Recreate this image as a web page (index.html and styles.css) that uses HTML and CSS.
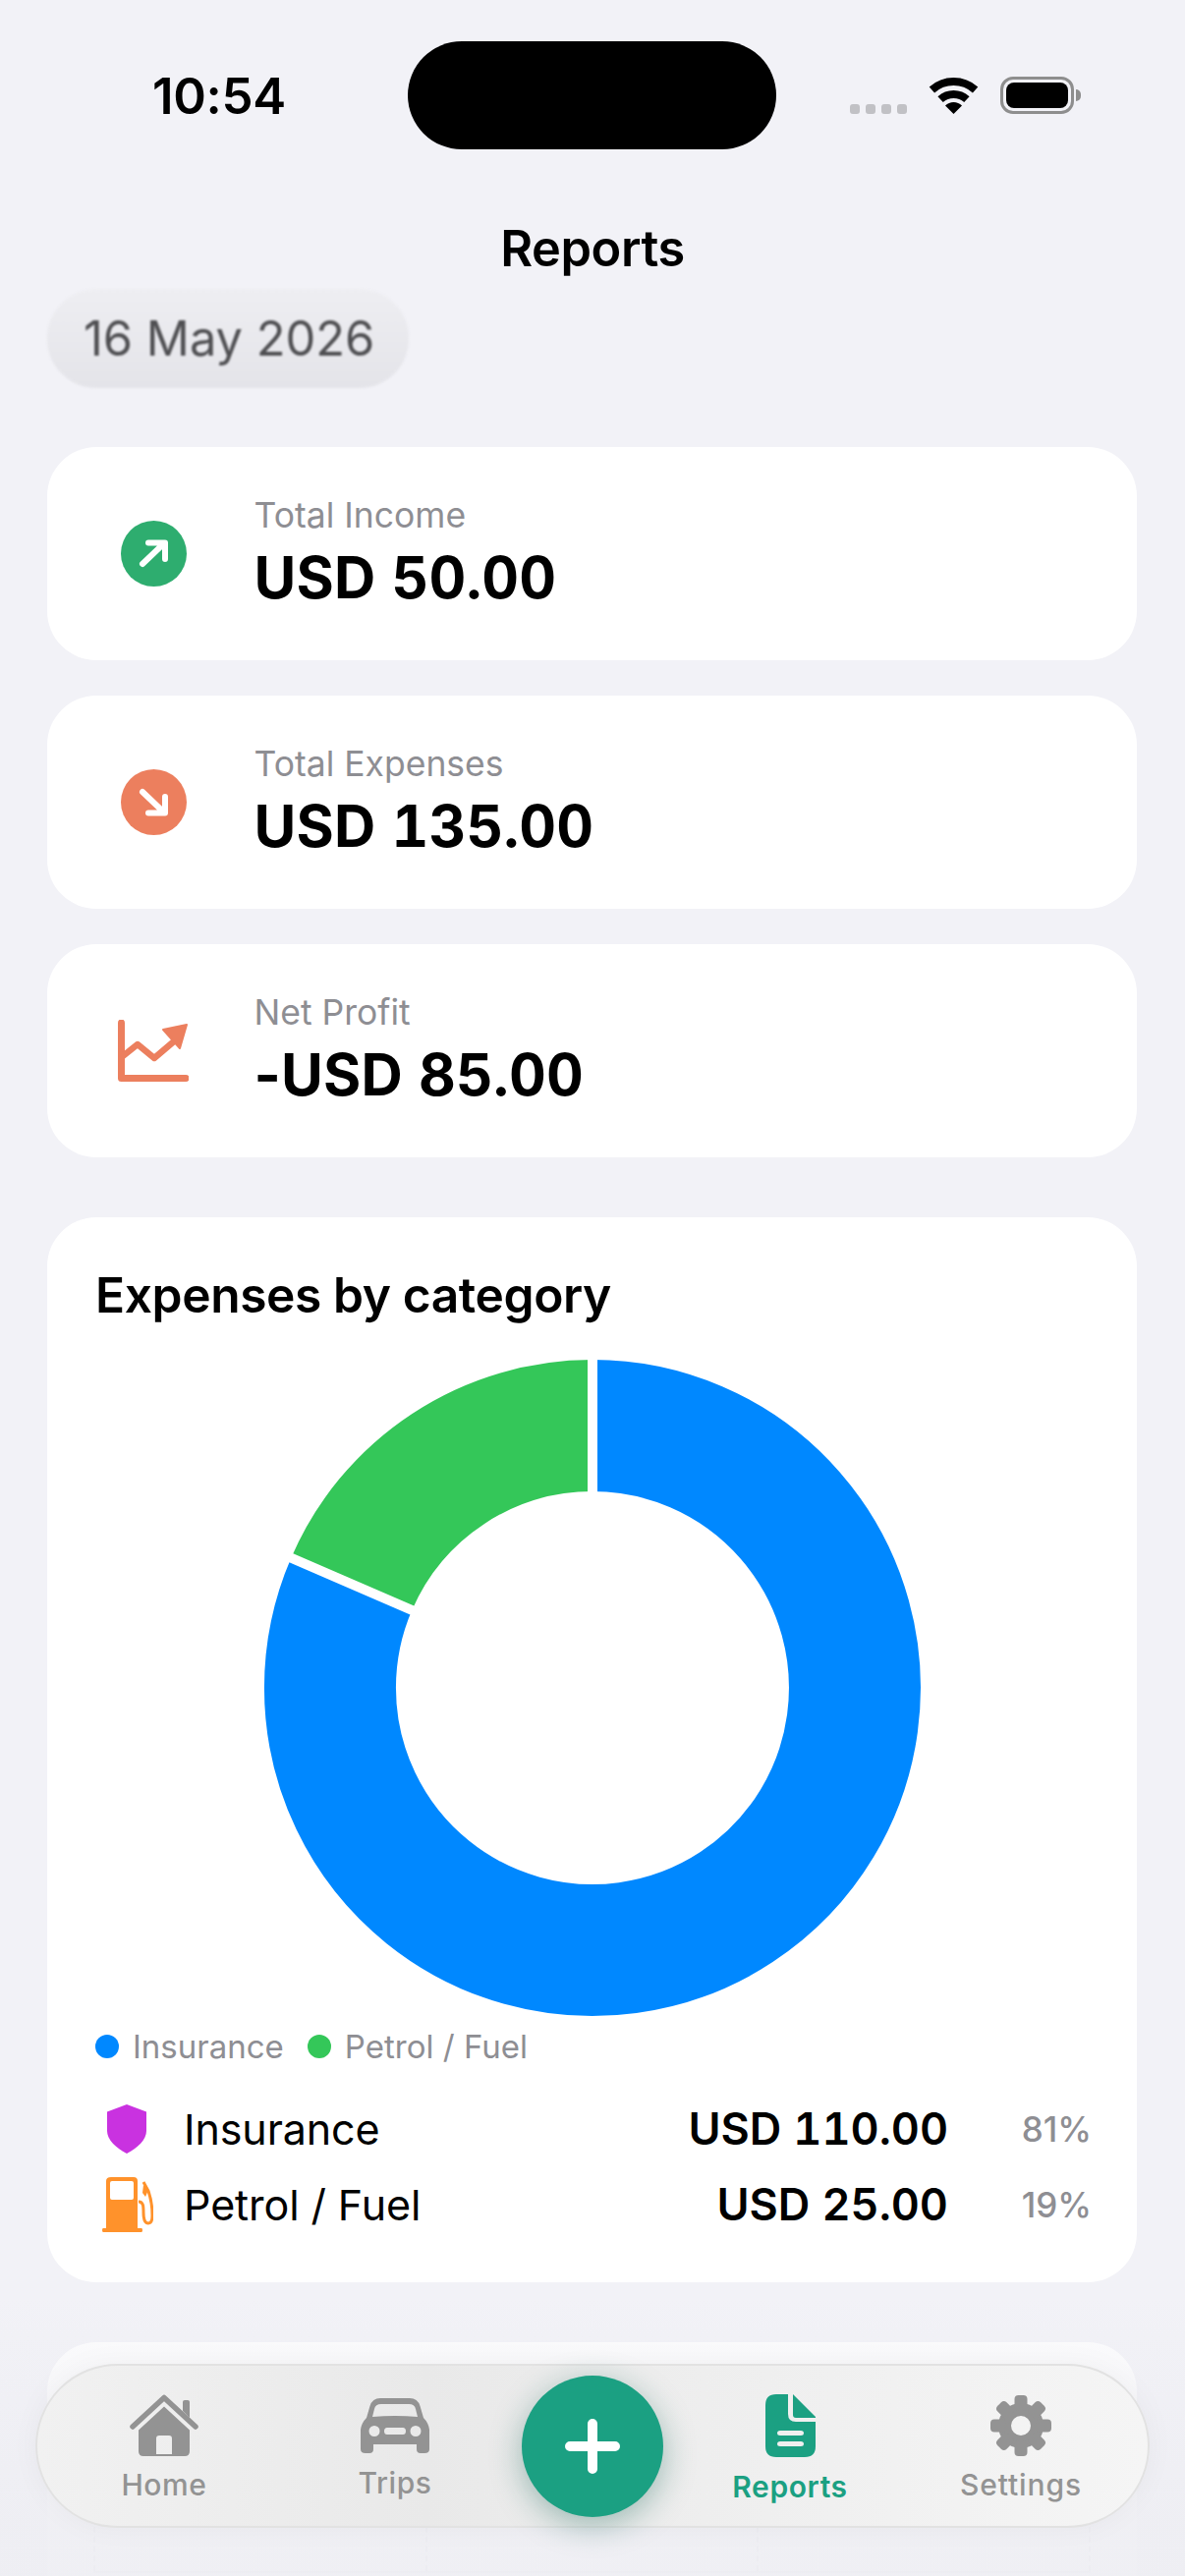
FILE: index.html
```html
<!DOCTYPE html>
<html>
<head>
  <meta charset="utf-8">
  <title>Reports</title>
  <link rel="stylesheet" href="styles.css">
</head>
<body>
  <div class="screen">
    <!-- status bar -->
    <header class="status">
      <span class="time">10:54</span>
      <div class="island"></div>
      <div class="status-icons">
        <div class="signal"><i></i><i></i><i></i><i></i></div>
        <svg class="wifi" width="51" height="38" viewBox="0 0 51 38">
          <path d="M3.4 13.5A33 33 0 0 1 47.6 13.5" fill="none" stroke="#000" stroke-width="8"/>
          <path d="M12.1 23.1A20 20 0 0 1 38.9 23.1" fill="none" stroke="#000" stroke-width="8"/>
          <path d="M25.5 38L17 29.5A12 12 0 0 1 34 29.5Z" fill="#000"/>
        </svg>
        <div class="battery"><div class="battery-fill"></div></div>
      </div>
    </header>

    <h1 class="page-title">Reports</h1>
    <div class="date-pill">16 May 2026</div>

    <main class="content">
      <!-- totals -->
      <section class="stat-card">
        <div class="stat-icon">
          <svg width="67" height="67" viewBox="0 0 67 67">
            <circle cx="33.5" cy="33.5" r="33.5" fill="#2EAD6F"/>
            <path d="M22 44L44 23M28 22.500H45V39" fill="none" stroke="#fff" stroke-width="6" stroke-linecap="round" stroke-linejoin="round"/>
          </svg>
        </div>
        <div class="stat-text">
          <div class="stat-label">Total Income</div>
          <div class="stat-value">USD 50.00</div>
        </div>
      </section>
      <section class="stat-card">
        <div class="stat-icon">
          <svg width="67" height="67" viewBox="0 0 67 67">
            <circle cx="33.5" cy="33.5" r="33.5" fill="#EC7F5E"/>
            <path d="M22 23L44 44M28 44.500H45V28" fill="none" stroke="#fff" stroke-width="6" stroke-linecap="round" stroke-linejoin="round"/>
          </svg>
        </div>
        <div class="stat-text">
          <div class="stat-label">Total Expenses</div>
          <div class="stat-value">USD 135.00</div>
        </div>
      </section>
      <section class="stat-card">
        <div class="stat-icon">
          <svg width="72" height="63" viewBox="0 0 72 63">
            <path d="M3.500 3V59.500H69" fill="none" stroke="#EC7F5E" stroke-width="7" stroke-linecap="round" stroke-linejoin="round"/>
            <path d="M5 37L20 25L37 39L57 22" fill="none" stroke="#EC7F5E" stroke-width="6.500" stroke-linejoin="round"/>
            <path d="M46 10L70 5L63 29Z" fill="#EC7F5E" stroke="#EC7F5E" stroke-width="2" stroke-linejoin="round"/>
          </svg>
        </div>
        <div class="stat-text">
          <div class="stat-label">Net Profit</div>
          <div class="stat-value"><span class="minus">-</span>USD 85.00</div>
        </div>
      </section>

      <!-- expenses donut -->
      <section class="chart-card">
        <h2 class="chart-title">Expenses by category</h2>
        <svg class="donut" width="668" height="668" viewBox="0 0 668 668">
          <path d="M334 67A267 267 0 1 1 88.800 228.200" fill="none" stroke="#0088FF" stroke-width="134"/>
          <path d="M88.800 228.200A267 267 0 0 1 334 67" fill="none" stroke="#34C759" stroke-width="134"/>
          <path d="M334 -4V140M155 257L21 199" fill="none" stroke="#fff" stroke-width="10"/>
        </svg>
        <div class="legend">
          <span class="legend-item"><i class="dot dot-blue"></i>Insurance</span>
          <span class="legend-item"><i class="dot dot-green"></i>Petrol / Fuel</span>
        </div>
        <div class="cat-row">
          <svg class="cat-icon" width="54" height="50" viewBox="0 0 54 50">
            <path d="M27 0L47 7.500V27C47 36 38 44 27 50C16 44 7 36 7 27V7.500Z" fill="#C932E0"/>
          </svg>
          <span class="cat-name">Insurance</span>
          <span class="cat-amount">USD 110.00</span>
          <span class="cat-pct">81%</span>
        </div>
        <div class="cat-row">
          <svg class="cat-icon" width="54" height="56" viewBox="-2 0 54 56">
            <path fill-rule="evenodd" d="M9 0H32Q36 0 36 4V52H40Q41 52 41 54T40 56H1Q0 56 0 54T1 52H4V4Q4 0 9 0ZM10 4Q8 4 8 6V21Q8 23 10 23H30Q32 23 32 21V6Q32 4 30 4Z" fill="#FF922B"/>
            <path d="M37 25C42 25 42 30 42 36C42 44 44 47 47 47C50 47 51 44 51 39C51 29 49 20 47 14L42 5" fill="none" stroke="#FF922B" stroke-width="3"/>
            <path d="M42 8L47 13L44 20L41 16Z" fill="#FF922B"/>
          </svg>
          <span class="cat-name">Petrol / Fuel</span>
          <span class="cat-amount">USD 25.00</span>
          <span class="cat-pct">19%</span>
        </div>
      </section>

      <!-- next chart, mostly under the tab bar -->
      <section class="next-card">
        <div class="grid-lines"><i></i><i></i><i></i><i></i></div>
      </section>
    </main>

    <div class="bottom-fade"></div>

    <!-- tab bar -->
    <nav class="tabbar">
      <a class="tab">
        <span class="tab-icon">
          <svg width="72" height="64" viewBox="0 0 72 64">
            <path d="M4 33L36 3.500L68 33" fill="none" stroke="#939393" stroke-width="5.500" stroke-linecap="round" stroke-linejoin="round"/>
            <path d="M55 17V7.500Q55 6 57 6H60Q62 6 62 7.500V24Z" fill="#939393"/>
            <path fill-rule="evenodd" d="M36 12.500L62 36.500V58Q62 63 57 63H15Q10 63 10 58V36.500ZM31 42Q28 42 28 45V61H44V45Q44 42 41 42Z" fill="#939393"/>
          </svg>
        </span>
        <span class="tab-label">Home</span>
      </a>
      <a class="tab tab-trips">
        <span class="tab-icon">
          <svg width="70" height="56" viewBox="0 0 70 56">
            <path fill-rule="evenodd" d="M20 0H50Q58 0 60.500 8L64 20Q69 25 70 32V52Q70 56 65 56H61Q57 56 57 52V47H13V52Q13 56 9 56H5Q0 56 0 52V32Q1 25 6 20L9.500 8Q12 0 20 0ZM21 6Q15 6 14 11L12 19Q35 17 58 19L56 11Q55 6 49 6ZM14 28A5.500 5.500 0 1 0 14.001 39A5.500 5.500 0 1 0 14 28ZM56 28A5.500 5.500 0 1 0 56.001 39A5.500 5.500 0 1 0 56 28ZM27 30Q24 30 24 33.500T27 37H43Q46 37 46 33.500T43 30Z" fill="#939393"/>
          </svg>
        </span>
        <span class="tab-label">Trips</span>
      </a>
      <div class="fab-slot">
        <button class="fab">
          <svg width="56" height="56" viewBox="0 0 56 56">
            <path d="M28 5V51M5 28H51" stroke="#fff" stroke-width="10" stroke-linecap="round"/>
          </svg>
        </button>
      </div>
      <a class="tab tab-active">
        <span class="tab-icon">
          <svg width="51" height="64" viewBox="0 0 51 64">
            <path fill-rule="evenodd" d="M11 0H23V20Q23 28 31 28H51V53Q51 64 40 64H11Q0 64 0 53V11Q0 0 11 0ZM15 37Q12 37 12 39.500T15 42H36Q39 42 39 39.500T36 37ZM15 48Q12 48 12 50.500T15 53H36Q39 53 39 50.500T36 48Z" fill="#1BA082"/>
            <path d="M28 0L51 23V24H31Q28 24 28 21Z" fill="#1BA082"/>
          </svg>
        </span>
        <span class="tab-label">Reports</span>
      </a>
      <a class="tab tab-settings">
        <span class="tab-icon">
          <svg width="62" height="62" viewBox="0 0 62 62">
            <circle cx="31" cy="31" r="16.500" fill="none" stroke="#939393" stroke-width="13"/>
            <g fill="#939393">
              <rect x="24.500" y="0" width="13" height="16" rx="4"/>
              <rect x="24.500" y="46" width="13" height="16" rx="4"/>
              <rect x="0" y="24.500" width="16" height="13" rx="4"/>
              <rect x="46" y="24.500" width="16" height="13" rx="4"/>
              <rect x="24.500" y="0" width="13" height="16" rx="4" transform="rotate(45 31 31)"/>
              <rect x="24.500" y="0" width="13" height="16" rx="4" transform="rotate(135 31 31)"/>
              <rect x="24.500" y="0" width="13" height="16" rx="4" transform="rotate(225 31 31)"/>
              <rect x="24.500" y="0" width="13" height="16" rx="4" transform="rotate(315 31 31)"/>
            </g>
          </svg>
        </span>
        <span class="tab-label">Settings</span>
      </a>
    </nav>
  </div>
</body>
</html>
```

FILE: styles.css
```css
* {
  box-sizing: border-box;
}
html, body {
  margin: 0;
  padding: 0;
}
body {
  background: #f2f2f7;
  font-family: Inter, "Liberation Sans", sans-serif;
  color: #000;
}
.screen {
  position: relative;
  width: 1206px;
  height: 2622px;
  overflow: hidden;
  background: #f2f2f7;
}

/* status bar */
.status {
  display: flex;
  align-items: center;
  height: 110px;
  margin-top: 42px;
  padding-left: 155px;
}
.time {
  width: 260px;
  font-size: 51px;
  font-weight: 600;
  letter-spacing: -0.3px;
}
.island {
  width: 375px;
  height: 110px;
  border-radius: 55px;
  background: #000;
}
.status-icons {
  display: flex;
  align-items: flex-end;
  height: 38px;
  margin-left: 75px;
}
.signal {
  display: flex;
  gap: 6px;
  margin-right: 22px;
}
.signal i {
  width: 10px;
  height: 10px;
  border-radius: 3px;
  background: #c1c1c5;
}
.wifi {
  display: block;
  margin-right: 22px;
}
.battery {
  position: relative;
  width: 75px;
  height: 38px;
  padding: 3px;
  border: 3px solid #8e8e8e;
  border-radius: 13px;
}
.battery::after {
  content: "";
  position: absolute;
  right: -10px;
  top: 10px;
  width: 5px;
  height: 12px;
  border-radius: 0 6px 6px 0;
  background: #8e8e8e;
}
.battery-fill {
  height: 100%;
  border-radius: 8px;
  background: #000;
}

.page-title {
  margin: 71px 0 0;
  height: 60px;
  line-height: 60px;
  text-align: center;
  font-size: 50.5px;
  font-weight: 600;
  letter-spacing: -0.4px;
}
.date-pill {
  width: 368px;
  height: 101px;
  margin: 11px 0 0 48px;
  padding-left: 37px;
  line-height: 101px;
  border-radius: 50px;
  background: linear-gradient(#eeeef2, #e4e4e9);
  color: #4f4f52;
  font-size: 48.8px;
  filter: blur(1.2px);
}

.content {
  padding: 60px 49px 0 48px;
}

/* stat cards */
.stat-card {
  display: flex;
  align-items: center;
  height: 217px;
  margin-bottom: 36px;
  padding-left: 72px;
  border-radius: 50px;
  background: #fff;
}
.stat-icon {
  display: flex;
  justify-content: center;
  width: 72px;
  margin-right: 66.5px;
}
.stat-icon svg {
  display: block;
}
.stat-text {
  padding-bottom: 2px;
}
.stat-label {
  font-size: 35.5px;
  line-height: 44px;
  color: #8e8e93;
}
.stat-value {
  margin-top: 6px;
  font-size: 58.5px;
  line-height: 70px;
  font-weight: 700;
  font-feature-settings: "tnum";
  letter-spacing: 0.2px;
}
.minus {
  font-feature-settings: normal;
}

/* donut card */
.chart-card {
  height: 1084px;
  margin-top: 61px;
  padding: 49px 46px 0 49px;
  border-radius: 50px;
  background: #fff;
}
.chart-title {
  margin: 0;
  line-height: 60px;
  font-size: 49.7px;
  font-weight: 600;
  letter-spacing: -0.4px;
}
.donut {
  display: block;
  margin: 36px 0 0 172px;
  overflow: visible;
}
.legend {
  display: flex;
  gap: 24px;
  margin-top: 11px;
  height: 40px;
}
.legend-item {
  display: flex;
  align-items: center;
  font-size: 33px;
  color: #8e8e93;
}
.dot {
  width: 24px;
  height: 24px;
  margin-right: 14px;
  border-radius: 50%;
}
.dot-blue {
  background: #0088ff;
}
.dot-green {
  background: #34c759;
}
.cat-row {
  display: flex;
  align-items: center;
  height: 77px;
}
.legend + .cat-row {
  margin-top: 25px;
}
.cat-icon {
  display: block;
  width: 54px;
  margin: 0 31px 0 5px;
}
.cat-name {
  flex: 1;
  font-size: 43px;
  letter-spacing: -0.1px;
}
.cat-amount {
  font-size: 45px;
  font-weight: 600;
  font-feature-settings: "tnum";
}
.cat-pct {
  width: 146px;
  text-align: right;
  font-size: 35px;
  font-weight: 500;
  color: #8e8e93;
}

/* next card under the bar */
.next-card {
  height: 400px;
  margin-top: 61px;
  padding: 90px 47px 0;
  border-radius: 50px;
  background: #fff;
}
.grid-lines {
  display: flex;
  justify-content: space-between;
  height: 145px;
  border-bottom: 2px solid #e4e4e8;
}
.grid-lines i {
  border-left: 2px dashed #d9d9dd;
}

.bottom-fade {
  position: absolute;
  left: 0;
  right: 0;
  top: 2340px;
  bottom: 0;
  background: linear-gradient(rgba(238, 238, 243, 0), rgba(238, 238, 243, 0.3) 16%, rgba(238, 238, 243, 0.92) 80%);
}

/* tab bar */
.tabbar {
  position: absolute;
  left: 36px;
  top: 2406px;
  display: grid;
  grid-template-columns: 235px 235px 1fr 235px 235px;
  width: 1134px;
  height: 167px;
  padding: 0 11.5px;
  border: 2px solid #e2e2e2;
  border-radius: 84px;
  background: linear-gradient(90deg, #f1f1f1, #e9e9e9 35%, #eeeeee 60%, #f5f5f5);
  box-shadow: 0 0 30px rgba(0, 0, 0, 0.04);
}
.tab {
  display: flex;
  flex-direction: column;
  align-items: center;
  padding-top: 29px;
  color: #939393;
}
.tab-icon {
  display: flex;
  align-items: center;
  justify-content: center;
  height: 64px;
}
.tab-label {
  margin-top: 10px;
  font-size: 30px;
  line-height: 36px;
  font-weight: 500;
  letter-spacing: 0.6px;
}
.tab-trips .tab-label {
  margin-top: 8px;
}
.tab-active {
  color: #1ba082;
}
.tab-active .tab-label {
  margin-top: 12px;
  font-weight: 600;
}
.tab-settings .tab-label {
  letter-spacing: 0.9px;
}
.fab-slot {
  display: flex;
  align-items: center;
  justify-content: center;
}
.fab {
  display: flex;
  align-items: center;
  justify-content: center;
  width: 144px;
  height: 144px;
  padding: 0;
  border: 0;
  border-radius: 50%;
  background: #1ba082;
  box-shadow: 0 8px 32px rgba(20, 100, 85, 0.38);
}
```
